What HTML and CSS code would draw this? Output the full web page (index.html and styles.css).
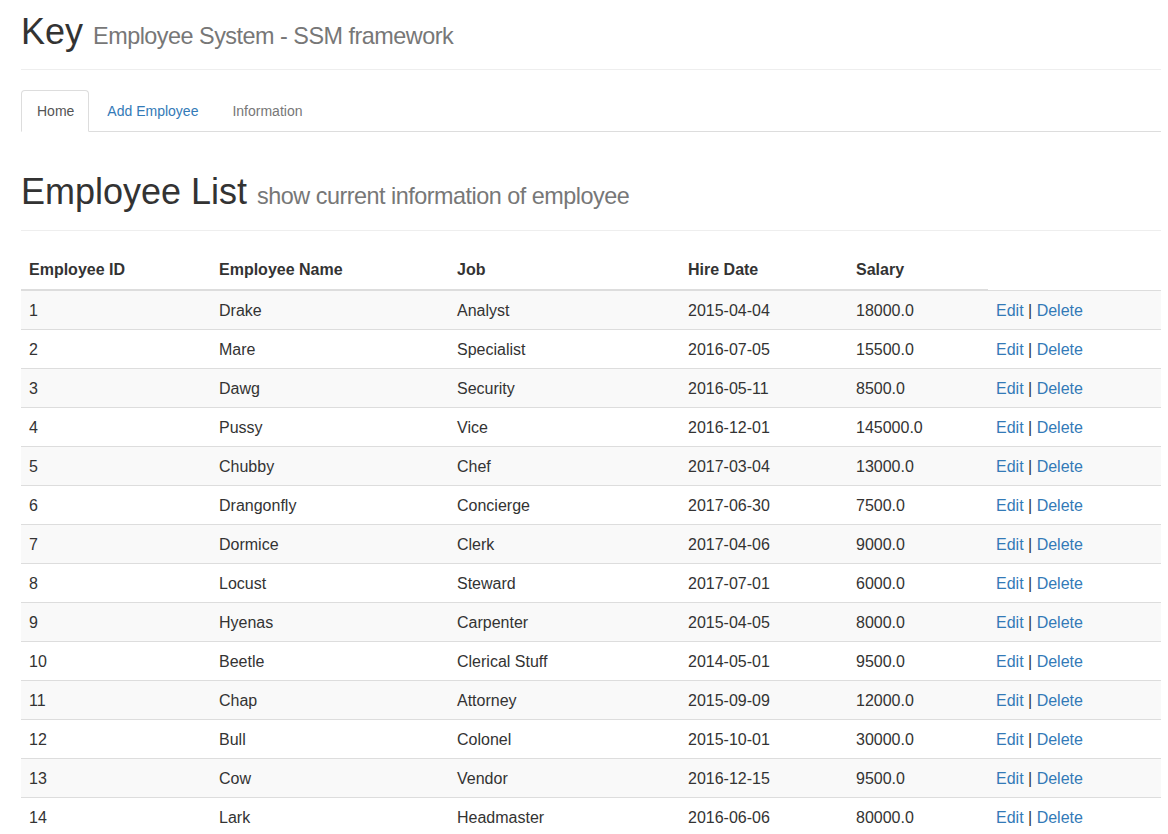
FILE: index.html
```html
<!DOCTYPE html>
<html lang="en">
<head>
<meta charset="utf-8">
<title>Employee System - SSM framework</title>
<link rel="stylesheet" href="styles.css">
</head>
<body>
<div class="container">
  <div class="site-header">
    <h1>Key <small>Employee System - SSM framework</small></h1>
  </div>
  <ul class="nav-tabs">
    <li class="active"><a href="#">Home</a></li>
    <li><a href="#">Add Employee</a></li>
    <li class="disabled"><a href="#">Information</a></li>
  </ul>
  <div class="page-header">
    <h1>Employee List <small>show current information of employee</small></h1>
  </div>
  <table class="table">
    <colgroup>
      <col class="c-id"><col class="c-name"><col class="c-job"><col class="c-date"><col class="c-sal"><col class="c-act">
    </colgroup>
    <thead>
      <tr><th>Employee ID</th><th>Employee Name</th><th>Job</th><th>Hire Date</th><th>Salary</th></tr>
    </thead>
    <tbody>
      <tr><td>1</td><td>Drake</td><td>Analyst</td><td>2015-04-04</td><td>18000.0</td><td><a href="#">Edit</a> | <a href="#">Delete</a></td></tr>
      <tr><td>2</td><td>Mare</td><td>Specialist</td><td>2016-07-05</td><td>15500.0</td><td><a href="#">Edit</a> | <a href="#">Delete</a></td></tr>
      <tr><td>3</td><td>Dawg</td><td>Security</td><td>2016-05-11</td><td>8500.0</td><td><a href="#">Edit</a> | <a href="#">Delete</a></td></tr>
      <tr><td>4</td><td>Pussy</td><td>Vice</td><td>2016-12-01</td><td>145000.0</td><td><a href="#">Edit</a> | <a href="#">Delete</a></td></tr>
      <tr><td>5</td><td>Chubby</td><td>Chef</td><td>2017-03-04</td><td>13000.0</td><td><a href="#">Edit</a> | <a href="#">Delete</a></td></tr>
      <tr><td>6</td><td>Drangonfly</td><td>Concierge</td><td>2017-06-30</td><td>7500.0</td><td><a href="#">Edit</a> | <a href="#">Delete</a></td></tr>
      <tr><td>7</td><td>Dormice</td><td>Clerk</td><td>2017-04-06</td><td>9000.0</td><td><a href="#">Edit</a> | <a href="#">Delete</a></td></tr>
      <tr><td>8</td><td>Locust</td><td>Steward</td><td>2017-07-01</td><td>6000.0</td><td><a href="#">Edit</a> | <a href="#">Delete</a></td></tr>
      <tr><td>9</td><td>Hyenas</td><td>Carpenter</td><td>2015-04-05</td><td>8000.0</td><td><a href="#">Edit</a> | <a href="#">Delete</a></td></tr>
      <tr><td>10</td><td>Beetle</td><td>Clerical Stuff</td><td>2014-05-01</td><td>9500.0</td><td><a href="#">Edit</a> | <a href="#">Delete</a></td></tr>
      <tr><td>11</td><td>Chap</td><td>Attorney</td><td>2015-09-09</td><td>12000.0</td><td><a href="#">Edit</a> | <a href="#">Delete</a></td></tr>
      <tr><td>12</td><td>Bull</td><td>Colonel</td><td>2015-10-01</td><td>30000.0</td><td><a href="#">Edit</a> | <a href="#">Delete</a></td></tr>
      <tr><td>13</td><td>Cow</td><td>Vendor</td><td>2016-12-15</td><td>9500.0</td><td><a href="#">Edit</a> | <a href="#">Delete</a></td></tr>
      <tr><td>14</td><td>Lark</td><td>Headmaster</td><td>2016-06-06</td><td>80000.0</td><td><a href="#">Edit</a> | <a href="#">Delete</a></td></tr>
    </tbody>
  </table>
</div>
</body>
</html>
```
FILE: styles.css
```css
* { box-sizing: border-box; }
html, body { margin: 0; padding: 0; background: #fff; }
body {
  font-family: "Liberation Sans", Arial, Helvetica, sans-serif;
  font-size: 14px;
  line-height: 1.42857143;
  color: #333;
}
a { color: #337ab7; text-decoration: none; }

.container {
  width: 1140px;
  margin-left: 21px;
}

h1 {
  font-family: "Liberation Sans", Arial, Helvetica, sans-serif;
  font-size: 36px;
  font-weight: 500;
  line-height: 1.1;
  color: #333;
  margin: 0;
}
h1 small {
  font-size: 65%;
  font-weight: 400;
  line-height: 1;
  letter-spacing: -0.5px;
  color: #777;
}

.site-header {
  padding: 12px 0 17px;
  border-bottom: 1px solid #eee;
  margin-bottom: 20px;
}

.nav-tabs {
  display: flex;
  list-style: none;
  margin: 0;
  padding: 0;
  border-bottom: 1px solid #ddd;
}
.nav-tabs li { margin-bottom: -1px; }
.nav-tabs a {
  display: block;
  padding: 10px 15px;
  line-height: 20px;
  margin-right: 2px;
  border: 1px solid transparent;
  border-radius: 4px 4px 0 0;
}
.nav-tabs .active a {
  color: #555;
  background: #fff;
  border-color: #ddd #ddd transparent;
  padding-right: 14px;
}
.nav-tabs .disabled a { color: #777; }

.page-header {
  margin: 40px 0 20px;
  padding-bottom: 9px;
  border-bottom: 1px solid #eee;
}
.page-header h1 { margin-bottom: 10px; }

.table {
  width: 1140px;
  table-layout: fixed;
  border-collapse: collapse;
  border-spacing: 0;
  font-size: 16px;
}
.c-id { width: 190px; }
.c-name { width: 238px; }
.c-job { width: 231px; }
.c-date { width: 168px; }
.c-sal { width: 140px; }
.c-act { width: 173px; }

.table th {
  text-align: left;
  font-weight: bold;
  padding: 8px;
  line-height: 22px;
  vertical-align: bottom;
  border-bottom: 2px solid #ddd;
}
.table td {
  padding: 9px 8px 7px;
  line-height: 22px;
  vertical-align: top;
  border-top: 1px solid #ddd;
}
.table tbody tr:nth-child(odd) { background: #f9f9f9; }
```
